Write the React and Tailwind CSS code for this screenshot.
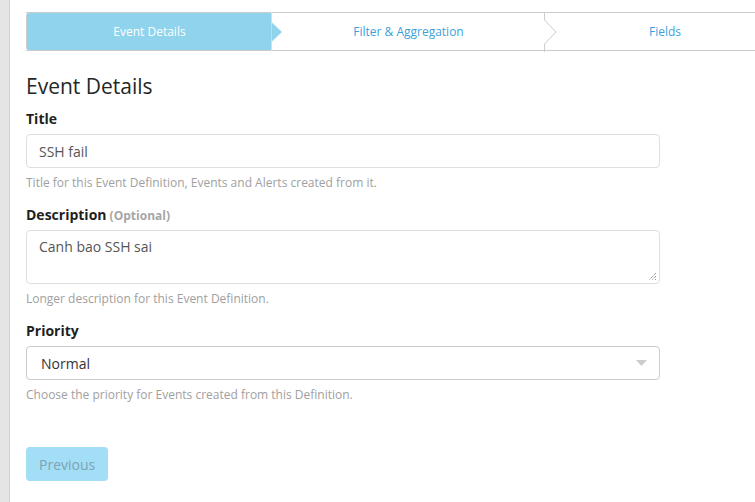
const steps = [
  { label: 'Event Details', width: 'w-[246px]', active: true },
  { label: 'Filter & Aggregation', width: 'w-[273px]', active: false },
  { label: 'Fields', width: 'w-[240px]', active: false },
];

function StepArrow({ active }) {
  // chevron that sits on the right edge of a step
  return (
    <svg
      className="absolute top-[-1px] right-[-12px] z-10"
      width="13"
      height="40"
      viewBox="0 0 13 40"
    >
      {active ? (
        <path d="M0 0 L0 9.5 L11 20 L0 30.5 L0 40 Z" fill="#8fd3ec" stroke="#d6eef7" strokeWidth="1" />
      ) : (
        <path d="M0.5 0 L0.5 8 L12 20 L0.5 32 L0.5 40" fill="#fff" stroke="#cccccc" strokeWidth="1" />
      )}
    </svg>
  );
}

function Stepper() {
  return (
    <div className="flex h-[39px] border-y border-[#cccccc] w-max">
      {steps.map((s, i) => (
        <div
          key={s.label}
          className={`relative flex items-center justify-center shrink-0 text-[12px] ${s.width} ${
            s.active ? 'bg-[#8fd3ec] text-white rounded-l-[3px] border-l border-[#cccccc]' : 'bg-white text-[#3d9fdc]'
          }`}
        >
          {s.label}
          {i < steps.length - 1 && <StepArrow active={s.active} />}
        </div>
      ))}
    </div>
  );
}

function Field({ label, optional, help, className = 'mb-[13px]', labelGap = 'mb-[5px]', children }) {
  return (
    <div className={className}>
      <label className={`block text-[14px] font-bold text-[#1f1f1f] leading-[20px] ${labelGap}`}>
        {label}
        {optional && <span className="text-[12px] text-[#a6a6a6] font-bold"> (Optional)</span>}
      </label>
      {children}
      <p className="text-[12px] text-[#a0a0a0] mt-[6px] leading-[17px]">{help}</p>
    </div>
  );
}

export default function App() {
  return (
    <div
      className="flex w-[755px] h-[502px] overflow-hidden bg-white"
      style={{ fontFamily: '"Open Sans", "Noto Sans", sans-serif' }}
    >
      <div className="w-[10px] shrink-0 bg-[#e5e5e5] border-r border-[#d0d0d0]" />
      <div className="flex-1 pl-[16px] pt-[12px] min-w-0">
        <Stepper />

        <h2 className="text-[21px] text-[#262626] mt-[20px] mb-[8px] leading-[30px]">Event Details</h2>

        <Field label="Title" className="mb-[14px]" help="Title for this Event Definition, Events and Alerts created from it.">
          <div className="w-[634px] h-[34px] border border-[#dcdfe3] rounded-[4px] px-[12px] flex items-center text-[14px] text-[#555]">
            SSH fail
          </div>
        </Field>

        <Field
          label="Description"
          optional
          labelGap="mb-[4px]"
          className="mb-[14px]"
          help="Longer description for this Event Definition."
        >
          <div className="relative w-[634px] h-[54px] border border-[#dcdfe3] rounded-[4px] px-[12px] pt-[5px] text-[14px] text-[#555]">
            Canh bao SSH sai
            <svg className="absolute right-[2px] bottom-[2px]" width="9" height="9" viewBox="0 0 9 9">
              <path d="M8 1 L1 8 M8 4 L4 8 M8 7 L7 8" stroke="#666" strokeWidth="1" strokeDasharray="1 1" />
            </svg>
          </div>
        </Field>

        <Field label="Priority" help="Choose the priority for Events created from this Definition.">
          <div className="w-[634px] h-[34px] border border-[#cccccc] rounded-[4px] pl-[14px] pr-[12px] flex items-center justify-between text-[14px] text-[#333]">
            <span>Normal</span>
            <svg width="11" height="6" viewBox="0 0 11 6">
              <path d="M0 0 L11 0 L5.5 6 Z" fill="#cccccc" />
            </svg>
          </div>
        </Field>

        <button
          disabled
          className="mt-[31px] h-[34px] px-[13px] rounded-[4px] bg-[#a2def5] text-[#7fa3b4] text-[14px]"
        >
          Previous
        </button>
      </div>
    </div>
  );
}
